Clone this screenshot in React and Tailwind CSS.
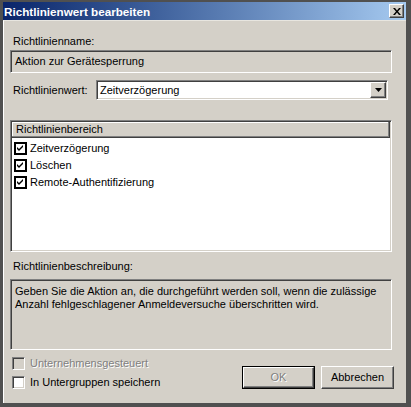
import React from "react";

const sunken =
  "border border-t-[#808080] border-l-[#808080] border-b-white border-r-white shadow-[inset_1px_1px_0_#404040,inset_-1px_-1px_0_#d4d0c8]";
const raised =
  "border border-t-white border-l-white border-b-[#404040] border-r-[#404040] shadow-[inset_-1px_-1px_0_#808080]";

function Check() {
  return (
    <svg width="7" height="7" viewBox="0 0 7 7" className="block">
      <path d="M0 2 L2 4 L6 0 L6 2 L2 6 L0 4 Z" fill="#000" />
    </svg>
  );
}

function ListItem({ label }) {
  return (
    <div className="flex h-[17px] items-center">
      <div className="ml-[3px] flex h-[13px] w-[13px] items-center justify-center border-2 border-black bg-white">
        <Check />
      </div>
      <span className="ml-[3px]">{label}</span>
    </div>
  );
}

function Checkbox({ label, disabled }) {
  return (
    <div className="flex h-[13px] items-center">
      <div
        className={`ml-[2px] h-[13px] w-[13px] ${sunken} ${
          disabled ? "bg-[#d4d0c8]" : "bg-white"
        }`}
      />
      <span
        className={`ml-[5px] ${
          disabled ? "text-[#808080] [text-shadow:1px_1px_0_#fff]" : "text-black"
        }`}
      >
        {label}
      </span>
    </div>
  );
}

export default function App() {
  return (
    <div className="h-[407px] w-[411px] overflow-hidden bg-[#505050] pb-[4px] pl-[3px] pr-[5px] pt-[2px] font-['Liberation_Sans',Arial,sans-serif] text-[11px] leading-[13px] text-black">
      <div className="flex h-full flex-col">
        {/* title bar */}
        <div className="flex h-[18px] shrink-0 items-center bg-gradient-to-r from-[#0a246a] to-[#a6caf0] pl-[1px] pr-[2px]">
          <span className="flex-1 text-[11.7px] font-bold text-white">
            Richtlinienwert bearbeiten
          </span>
          <div className={`flex h-[14px] w-[15px] items-center justify-center bg-[#d4d0c8] ${raised}`}>
            <svg width="8" height="7" viewBox="0 0 8 7">
              <path
                d="M0 0 H2 L4 2.5 L6 0 H8 L5 3.5 L8 7 H6 L4 4.5 L2 7 H0 L3 3.5 Z"
                fill="#000"
              />
            </svg>
          </div>
        </div>

        {/* body */}
        <div className="flex flex-1 flex-col border-l border-t border-l-white border-t-[#e8e6e0] bg-[#d4d0c8] pl-[6px] pr-[12px]">
          <div className="ml-[3px] mt-[14px]">Richtlinienname:</div>
          <div className={`mr-[2px] mt-[2px] flex h-[23px] items-center pl-[4px] ${sunken} bg-[#d4d0c8]`}>
            Aktion zur Gerätesperrung
          </div>

          <div className="mr-[6px] mt-[7px] flex h-[20px] items-center">
            <span className="ml-[3px] w-[83px]">Richtlinienwert:</span>
            <div className={`flex h-[20px] flex-1 items-center bg-white pl-[3px] ${sunken}`}>
              <span className="flex-1">Zeitverzögerung</span>
              <div className={`mr-[1px] flex h-[16px] w-[16px] items-center justify-center bg-[#d4d0c8] ${raised}`}>
                <svg width="7" height="4" viewBox="0 0 7 4">
                  <path d="M0 0 H7 L3.5 4 Z" fill="#000" />
                </svg>
              </div>
            </div>
          </div>

          <div className={`mr-[2px] mt-[20px] flex h-[132px] flex-col bg-white ${sunken}`}>
            <div className="mx-[1px] mt-[1px] flex h-[16px] items-center border-b border-r border-b-[#404040] border-r-[#404040] bg-[#d4d0c8] pl-[4px] shadow-[inset_-1px_-1px_0_#808080,inset_1px_1px_0_#fff]">
              Richtlinienbereich
            </div>
            <div className="pt-[2px]">
              <ListItem label="Zeitverzögerung" />
              <ListItem label="Löschen" />
              <ListItem label="Remote-Authentifizierung" />
            </div>
          </div>

          <div className="ml-[3px] mt-[8px]">Richtlinienbeschreibung:</div>
          <div className={`mr-[2px] mt-[6px] h-[71px] bg-[#d4d0c8] pl-[4px] pt-[5px] ${sunken}`}>
            Geben Sie die Aktion an, die durchgeführt werden soll, wenn die zulässige
            <br />
            Anzahl fehlgeschlagener Anmeldeversuche überschritten wird.
          </div>

          <div className="flex justify-between">
            <div className="mt-[7px] flex flex-col gap-[6px]">
              <Checkbox label="Unternehmensgesteuert" disabled />
              <Checkbox label="In Untergruppen speichern" />
            </div>
            <div className="mt-[16px] flex gap-[6px]">
              <button
                type="button"
                disabled
                className="flex h-[23px] w-[73px] items-center justify-center border border-black bg-[#d4d0c8]"
              >
                <span className={`flex h-full w-full items-center justify-center ${raised} text-[#808080] [text-shadow:1px_1px_0_#fff]`}>
                  OK
                </span>
              </button>
              <button
                type="button"
                className={`flex h-[23px] w-[73px] items-center justify-center bg-[#d4d0c8] ${raised}`}
              >
                Abbrechen
              </button>
            </div>
          </div>
        </div>
      </div>
    </div>
  );
}
